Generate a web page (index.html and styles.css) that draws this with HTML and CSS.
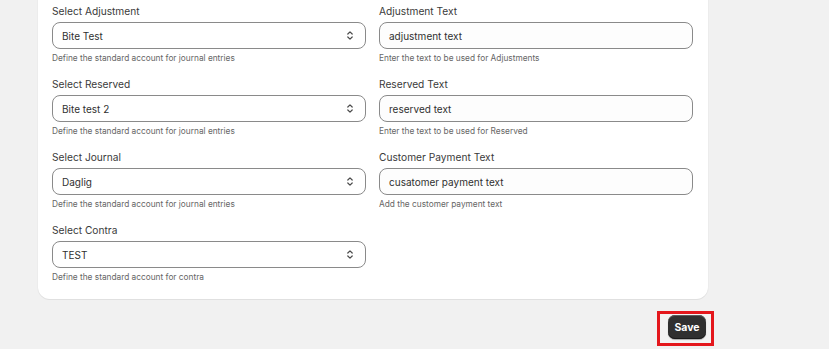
FILE: index.html
```html
<!DOCTYPE html>
<html lang="en">
<head>
    <meta charset="UTF-8">
    <meta name="viewport" content="width=device-width, initial-scale=1.0">
    <title>Journal Settings</title>
    <link rel="stylesheet" href="styles.css">
</head>
<body>
    <div class="page">
        <div class="settings-card">
            <div class="form-grid">
                <div class="field">
                    <label class="field-label">Select Adjustment</label>
                    <div class="select-box">
                        <span>Bite Test</span>
                        <svg class="chevrons" width="8" height="11" viewBox="0 0 8 11"><path d="M1.8 4 L4 1.8 L6.2 4 M1.8 7 L4 9.2 L6.2 7" fill="none" stroke="#4a4a4a" stroke-width="1.2" stroke-linecap="round" stroke-linejoin="round"/></svg>
                    </div>
                    <div class="help-text">Define the standard account for journal entries</div>
                </div>
                <div class="field">
                    <label class="field-label">Adjustment Text</label>
                    <div class="text-box">adjustment text</div>
                    <div class="help-text">Enter the text to be used for Adjustments</div>
                </div>

                <div class="field">
                    <label class="field-label">Select Reserved</label>
                    <div class="select-box">
                        <span>Bite test 2</span>
                        <svg class="chevrons" width="8" height="11" viewBox="0 0 8 11"><path d="M1.8 4 L4 1.8 L6.2 4 M1.8 7 L4 9.2 L6.2 7" fill="none" stroke="#4a4a4a" stroke-width="1.2" stroke-linecap="round" stroke-linejoin="round"/></svg>
                    </div>
                    <div class="help-text">Define the standard account for journal entries</div>
                </div>
                <div class="field">
                    <label class="field-label">Reserved Text</label>
                    <div class="text-box">reserved text</div>
                    <div class="help-text">Enter the text to be used for Reserved</div>
                </div>

                <div class="field">
                    <label class="field-label">Select Journal</label>
                    <div class="select-box">
                        <span>Daglig</span>
                        <svg class="chevrons" width="8" height="11" viewBox="0 0 8 11"><path d="M1.8 4 L4 1.8 L6.2 4 M1.8 7 L4 9.2 L6.2 7" fill="none" stroke="#4a4a4a" stroke-width="1.2" stroke-linecap="round" stroke-linejoin="round"/></svg>
                    </div>
                    <div class="help-text">Define the standard account for journal entries</div>
                </div>
                <div class="field">
                    <label class="field-label">Customer Payment Text</label>
                    <div class="text-box">cusatomer payment text</div>
                    <div class="help-text">Add the customer payment text</div>
                </div>

                <div class="field">
                    <label class="field-label">Select Contra</label>
                    <div class="select-box">
                        <span>TEST</span>
                        <svg class="chevrons" width="8" height="11" viewBox="0 0 8 11"><path d="M1.8 4 L4 1.8 L6.2 4 M1.8 7 L4 9.2 L6.2 7" fill="none" stroke="#4a4a4a" stroke-width="1.2" stroke-linecap="round" stroke-linejoin="round"/></svg>
                    </div>
                    <div class="help-text">Define the standard account for contra</div>
                </div>
            </div>
        </div>

        <div class="actions">
            <div class="highlight">
                <button class="save-button">Save</button>
            </div>
        </div>
    </div>
</body>
</html>
```

FILE: styles.css
```css
body {
    margin: 0;
    padding: 0;
    background-color: #f1f1f1;
    font-family: 'Inter', 'Liberation Sans', sans-serif;
    color: #303030;
}

.page {
    width: 670px;
    margin-left: 38px;
}

.settings-card {
    background-color: #ffffff;
    border-radius: 12px;
    margin-top: -12px;
    padding: 15px 15px 16px 14px;
    box-shadow: 0 1px 0 #e0e0e0, 0 0 0 1px #ececec;
}

.form-grid {
    display: grid;
    grid-template-columns: 314px 314px;
    column-gap: 13px;
    row-gap: 12px;
}

.field {
    display: flex;
    flex-direction: column;
}

.field-label {
    font-size: 10.2px;
    line-height: 16px;
    color: #3a3a3a;
    margin-bottom: 3px;
}

.select-box,
.text-box {
    box-sizing: border-box;
    height: 27px;
    border: 1px solid #8a8a8a;
    border-radius: 8px;
    background-color: #fdfdfd;
    font-size: 10px;
    color: #303030;
    padding: 0 9px;
    display: flex;
    align-items: center;
}

.select-box {
    justify-content: space-between;
    background-color: #ffffff;
}

.chevrons {
    margin-right: 2px;
}

.help-text {
    font-size: 8.3px;
    line-height: 12px;
    color: #666666;
    margin-top: 3px;
}

.actions {
    display: flex;
    justify-content: flex-end;
    margin-top: 12px;
    margin-right: -6px;
}

.highlight {
    border: 3px solid #e4171c;
    padding: 1px 5px 4px 8px;
    background-color: #f3f3f3;
}

.save-button {
    display: block;
    height: 24px;
    width: 38px;
    padding: 0;
    border: none;
    border-radius: 7px;
    background-color: #303030;
    color: #ffffff;
    font-family: 'Inter', 'Liberation Sans', sans-serif;
    font-size: 10.5px;
    font-weight: 700;
    box-shadow: inset 0 1px 0 #5a5a5a, inset 0 -1px 0 #1a1a1a, 0 1px 1px rgba(0, 0, 0, 0.3);
    cursor: pointer;
}
```
